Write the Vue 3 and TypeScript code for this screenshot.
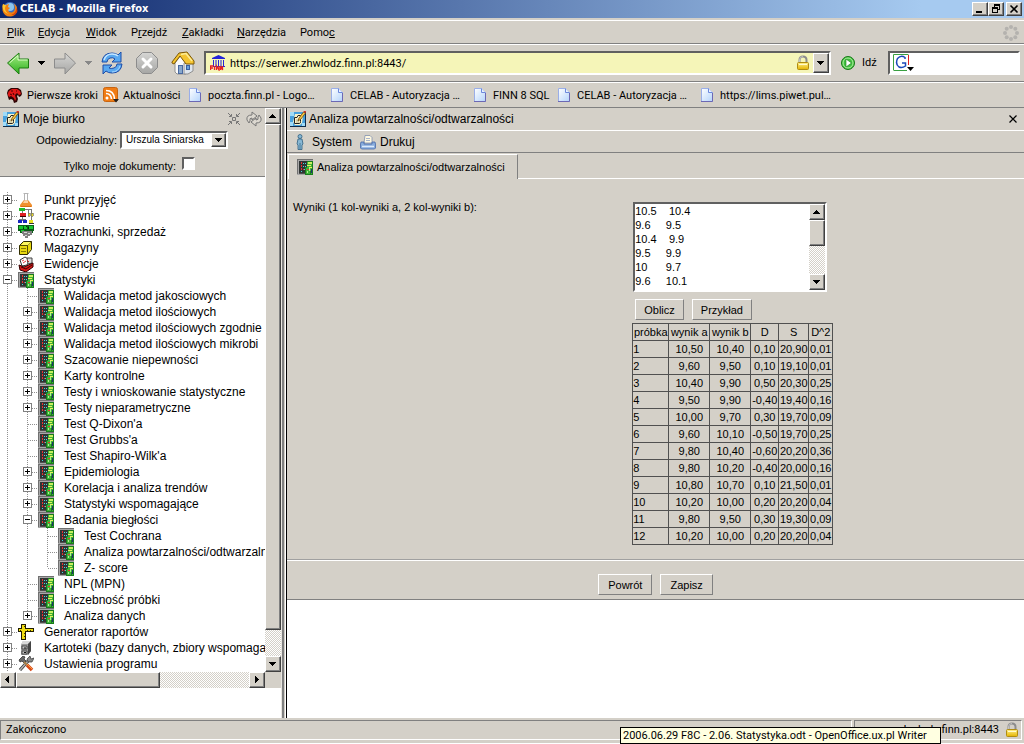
<script setup lang="ts">
import { ref } from 'vue'

interface MenuItem { pre: string; key: string; post: string }
interface TreeNode { label: string; icon: string; level: number; toggle: '' | '+' | '-'; last?: boolean }

const menu: MenuItem[] = [
  { pre: '', key: 'P', post: 'lik' },
  { pre: '', key: 'E', post: 'dycja' },
  { pre: '', key: 'W', post: 'idok' },
  { pre: 'P', key: 'r', post: 'zejdź' },
  { pre: '', key: 'Z', post: 'akładki' },
  { pre: '', key: 'N', post: 'arzędzia' },
  { pre: 'Pomo', key: 'c', post: '' },
]

const bookmarks = [
  { icon: 'dino', label: 'Pierwsze kroki' },
  { icon: 'rss', label: 'Aktualności' },
  { icon: 'page', label: 'poczta.finn.pl - Logo…' },
  { icon: 'page', label: 'CELAB - Autoryzacja …' },
  { icon: 'page', label: 'FINN 8 SQL' },
  { icon: 'page', label: 'CELAB - Autoryzacja …' },
  { icon: 'page', label: 'https://lims.piwet.pul…' },
]

const tree: TreeNode[] = [
  { label: 'Punkt przyjęć', icon: 'flask', level: 0, toggle: '+' },
  { label: 'Pracownie', icon: 'labs', level: 0, toggle: '+' },
  { label: 'Rozrachunki, sprzedaż', icon: 'money', level: 0, toggle: '+' },
  { label: 'Magazyny', icon: 'box', level: 0, toggle: '+' },
  { label: 'Ewidencje', icon: 'records', level: 0, toggle: '+' },
  { label: 'Statystyki', icon: 'calc', level: 0, toggle: '-' },
  { label: 'Walidacja metod jakosciowych', icon: 'calc', level: 1, toggle: '' },
  { label: 'Walidacja metod ilościowych', icon: 'calc', level: 1, toggle: '+' },
  { label: 'Walidacja metod ilościowych zgodnie', icon: 'calc', level: 1, toggle: '+' },
  { label: 'Walidacja metod ilościowych mikrobi', icon: 'calc', level: 1, toggle: '+' },
  { label: 'Szacowanie niepewności', icon: 'calc', level: 1, toggle: '+' },
  { label: 'Karty kontrolne', icon: 'calc', level: 1, toggle: '+' },
  { label: 'Testy i wnioskowanie statystyczne', icon: 'calc', level: 1, toggle: '+' },
  { label: 'Testy nieparametryczne', icon: 'calc', level: 1, toggle: '+' },
  { label: "Test Q-Dixon'a", icon: 'calc', level: 1, toggle: '' },
  { label: "Test Grubbs'a", icon: 'calc', level: 1, toggle: '' },
  { label: "Test Shapiro-Wilk'a", icon: 'calc', level: 1, toggle: '' },
  { label: 'Epidemiologia', icon: 'calc', level: 1, toggle: '+' },
  { label: 'Korelacja i analiza trendów', icon: 'calc', level: 1, toggle: '+' },
  { label: 'Statystyki wspomagające', icon: 'calc', level: 1, toggle: '+' },
  { label: 'Badania biegłości', icon: 'calc', level: 1, toggle: '-' },
  { label: 'Test Cochrana', icon: 'calc', level: 2, toggle: '' },
  { label: 'Analiza powtarzalności/odtwarzalności', icon: 'calc', level: 2, toggle: '' },
  { label: 'Z- score', icon: 'calc', level: 2, toggle: '', last: true },
  { label: 'NPL (MPN)', icon: 'calc', level: 1, toggle: '' },
  { label: 'Liczebność próbki', icon: 'calc', level: 1, toggle: '' },
  { label: 'Analiza danych', icon: 'calc', level: 1, toggle: '+', last: true },
  { label: 'Generator raportów', icon: 'ruler', level: 0, toggle: '+' },
  { label: 'Kartoteki (bazy danych, zbiory wspomaga', icon: 'cabinet', level: 0, toggle: '+' },
  { label: 'Ustawienia programu', icon: 'tools', level: 0, toggle: '+' },
]

const columns = ['próbka', 'wynik a', 'wynik b', 'D', 'S', 'D^2']
const rows: string[][] = [
  ['1', '10,50', '10,40', '0,10', '20,90', '0,01'],
  ['2', '9,60', '9,50', '0,10', '19,10', '0,01'],
  ['3', '10,40', '9,90', '0,50', '20,30', '0,25'],
  ['4', '9,50', '9,90', '-0,40', '19,40', '0,16'],
  ['5', '10,00', '9,70', '0,30', '19,70', '0,09'],
  ['6', '9,60', '10,10', '-0,50', '19,70', '0,25'],
  ['7', '9,80', '10,40', '-0,60', '20,20', '0,36'],
  ['8', '9,80', '10,20', '-0,40', '20,00', '0,16'],
  ['9', '10,80', '10,70', '0,10', '21,50', '0,01'],
  ['10', '10,20', '10,00', '0,20', '20,20', '0,04'],
  ['11', '9,80', '9,50', '0,30', '19,30', '0,09'],
  ['12', '10,20', '10,00', '0,20', '20,20', '0,04'],
]

const url = ref('https://serwer.zhwlodz.finn.pl:8443/')
const search = ref('')
const owner = ref('Urszula Siniarska')
const onlyMine = ref(false)
const samples = ref(
  ['10.5    10.4', '9.6     9.5', '10.4    9.9', '9.5     9.9', '10      9.7', '9.6     10.1'].join('\n'),
)
</script>

<template>
  <div class="window">
    <svg class="defs" aria-hidden="true">
      <defs>
        <linearGradient id="g-green" x1="0" y1="0" x2="0" y2="1"><stop offset="0" stop-color="#a8f088" /><stop offset="1" stop-color="#2cae1c" /></linearGradient>
        <linearGradient id="g-gray" x1="0" y1="0" x2="0" y2="1"><stop offset="0" stop-color="#d6d6d4" /><stop offset="1" stop-color="#a6a6a4" /></linearGradient>
        <linearGradient id="g-page" x1="0" y1="0" x2="1" y2="1"><stop offset="0" stop-color="#fff" /><stop offset="1" stop-color="#b4d4fc" /></linearGradient>
        <linearGradient id="g-lock" x1="0" y1="0" x2="0" y2="1"><stop offset="0" stop-color="#fff08c" /><stop offset="1" stop-color="#e4b400" /></linearGradient>
      </defs>
      <symbol id="i-firefox" viewBox="0 0 16 16">
        <circle cx="8" cy="8" r="7" fill="#3a6fc0" /><circle cx="8" cy="6" r="4" fill="#8cc4ec" />
        <path d="M1 3q1 1 3 1l3-1-1 3 2 1-2 2q1 3 4 2.500q3-1 3-5l-1-4q4 3 3 8-2 5-7 5-6 0-7.500-6Q0 6 1 3z" fill="#f08010" />
        <path d="M1 3q1 1 3 1L3 7q0 4 4 6-5-1-6-5Q0 5 1 3z" fill="#f8c830" /><path d="M14 6q1 6-5 8 5 1 6.500-4z" fill="#d84408" />
      </symbol>
      <symbol id="i-dino" viewBox="0 0 16 16">
        <path d="M0 6l1-3 3-2h7l3 2 1 4-1 2-2 1-1-2-1 1 1 3-1 3-3 1-1-3-2-1-2 1-1-3z" fill="#300404" />
        <path d="M1 6l1-2 3-2h5l3 2 1 3-2 1-2-2-2 2 1 4-1 2-1-3-3-2-2 1-1-2z" fill="#e01818" />
        <path d="M4 4h2M9 4h1M3 7l2 1M6 6l1 2" stroke="#400" />
      </symbol>
      <symbol id="i-rss" viewBox="0 0 16 16">
        <rect x="0.500" y="0.500" width="14" height="14" rx="2" fill="#f07c14" stroke="#c86410" /><circle cx="4" cy="11" r="1.500" fill="#fff" />
        <path d="M3 6.500q5 0 5.500 5.500M3 3.500q8 0 8.500 8.500" stroke="#fff" stroke-width="1.600" fill="none" /><path d="M10 12h6l-3 3.500z" fill="#222" />
      </symbol>
      <symbol id="i-page" viewBox="0 0 16 16">
        <path d="M1.500 1.500h7l4 4v9h-11z" fill="url(#g-page)" stroke="#9aaee8" /><path d="M8.500 1.500v4h4" fill="#e8f2ff" stroke="#6c88dc" /><path d="M1 14.500h11.500V6" fill="none" stroke="#6c68b4" />
      </symbol>
      <symbol id="i-bank" viewBox="0 0 16 16">
        <path d="M2 3L8.500 0 15 3v1H2zM3 5h1v6H3zm2.500 0h1v6h-1zM8 5h1v6H8zm2.500 0h1v6h-1zM13 5h1v6h-1zM3 11h12v1H3z" fill="#2424d8" />
        <path d="M.5 15v-4h3m-3 2h2.500M4.500 11v4M6.500 15v-4l2.500 4v-4M10.500 15v-4l2 4v-4" stroke="#e82020" stroke-width="1.300" fill="none" />
      </symbol>
      <symbol id="i-lock" viewBox="0 0 16 16">
        <path d="M4.500 8V5q0-3.500 3.500-3.500T11.500 5v3" fill="none" stroke="#8c8c8c" stroke-width="2" /><path d="M4.500 7V5q0-3.500 3.500-3.500" fill="none" stroke="#c4c4c4" />
        <rect x="2.500" y="7.500" width="11" height="7" rx="1" fill="url(#g-lock)" stroke="#b08c10" /><path d="M4 9.500h8" stroke="#fffbd0" />
      </symbol>
      <symbol id="i-note" viewBox="0 0 16 16">
        <rect x="0" y="1" width="16" height="15" fill="#102c48" /><rect x="0" y="1" width="15" height="14" fill="#48a0dc" /><path d="M0 1h4v4H0zm0 10h3v4H0zm12 1h3v3h-3z" fill="#a0dcf8" />
        <path d="M5 3h6l2 2-1 7-2 2H5l-2-3z" fill="#fcf4c8" /><path d="M10.500 4.500H8l-1 2H4.500v6h5q1 0 1-2z" fill="#fcf4c8" stroke="#222" /><path d="M6 9h3M6 11h3" stroke="#b8b08c" />
        <path d="M8 10l1-3 4.500-6 2 1L11 8z" fill="#f8c840" stroke="#704810" stroke-width=".8" /><path d="M13.500 1l2 1 .5-2h-2z" fill="#d03020" />
      </symbol>
      <symbol id="i-flask" viewBox="0 0 16 16">
        <path d="M5.500 1.500h5M6.500 2v6l-4 6M9.500 2v6l4 6" stroke="#b4b4b4" fill="none" /><path d="M5.500 8.500h5L14 13v2H2v-2z" fill="#f09030" /><path d="M6 9h4v2H5z" fill="#fcd0a0" /><path d="M3 14.500h10" stroke="#d86c10" />
      </symbol>
      <symbol id="i-labs" viewBox="0 0 16 16" shape-rendering="crispEdges">
        <path d="M4.500 3v10M7 1.500h6.500V6M10.500 5V2M1.500 13v-2h6v2M13.500 8v4" stroke="#777" fill="none" /><rect x="1" y="0" width="6" height="3" fill="#20b828" /><rect x="2" y="5" width="6" height="3" fill="#e02020" />
        <path d="M2 8h6v1H2z" fill="#400" /><path d="M10 5h2v3h-2zM13 5h2v3h-2z" fill="#e8d820" stroke="#776" stroke-width=".7" /><path d="M0 12h4v3H0zM5 12h4v3H5z" fill="#1828c0" /><path d="M11 12h4v3h-4z" fill="#e8e020" /><path d="M11 15h5v1h-5z" fill="#333" />
      </symbol>
      <symbol id="i-money" viewBox="0 0 16 16" shape-rendering="crispEdges">
        <path d="M0 1h16v6h-1v2H2V7H0z" fill="#0c5c18" /><path d="M1 2h4v3H1zm5 0h3v3H6zm5 0h4v3h-4zM3 6h3v2H3z" fill="#18c830" /><path d="M8 2h1v1H8zM5 4h1v1H5zM10 3h1v2h-1z" fill="#042c08" />
        <path d="M4 7h10v4h-2v1h-2v2H7v-2H5v-2H4z" fill="#808080" /><path d="M6 8h3v1H6zm4 1h2v1h-2zM7 11h2v1H7z" fill="#d8d8d8" />
      </symbol>
      <symbol id="i-box" viewBox="0 0 16 16">
        <path d="M1.500 5.500l4-4h8v8l-4 5h-8z" fill="#e8d810" stroke="#302c00" /><path d="M1.500 5.500h8l4-4M9.500 5.500v9" fill="none" stroke="#554c00" /><path d="M3 8.500h5M3 11.500h5" stroke="#887c00" /><path d="M3 5l3-3h7l-3 3z" fill="#fcf860" />
      </symbol>
      <symbol id="i-records" viewBox="0 0 16 16">
        <path d="M2 4l5-3 5 3-3 5-5 1z" fill="#fff" stroke="#333" /><path d="M9 2h5v5l-4 1z" fill="#ddd" stroke="#444" /><path d="M4 5l2-1M5 7l3-2" stroke="#e04040" />
        <path d="M1 9l5 2 9-4v4l-7 5-6-2z" fill="#d81818" stroke="#300" /><path d="M3 11l5 2 6-4" fill="none" stroke="#400" /><path d="M9 4l2 2" stroke="#d02020" />
      </symbol>
      <symbol id="i-calc" viewBox="0 0 16 16" shape-rendering="crispEdges">
        <rect width="16" height="16" fill="#a8a8a8" /><path d="M0 0h16v1H1v14H0z" fill="#707070" /><path d="M2 2h13v12H2z" fill="#303434" /><path d="M2 14h7v1H2z" fill="#505050" />
        <path d="M4 3h1v2H4zM4 6h1v2H4zM4 9h1v2H4zM6 10h1v1H6z" fill="#e83030" /><path d="M6 4h1v1H6zM8 4h1v1H8zM6 7h1v1H6zM8 7h1v1H8zM7 10h1v1H7zM4 12h1v1H4z" fill="#48d8e0" />
        <path d="M10 2h6v14H8V8h2z" fill="#187c1c" /><path d="M10 3h5v12h-1v-3h-1v3H9V9h1z" fill="#40b438" /><path d="M11 3h4v2h-4z" fill="#c8f060" /><path d="M10 6h4v1h-4zM12 8h3v1h-3z" fill="#e8f060" /><path d="M10 10h2v1h-2z" fill="#e04030" /><path d="M10 12h1v2h-1zM12 9h1v3h-1z" fill="#b0f090" /><path d="M14 10h1v4h-1z" fill="#203070" />
      </symbol>
      <symbol id="i-ruler" viewBox="0 0 16 16" shape-rendering="crispEdges">
        <path d="M3 0h5v4h8v4H8v8H3V8H0V4h3z" fill="#201c00" /><path d="M4 1h3v14H4zM1 5h14v2H1z" fill="#f0dc10" /><path d="M6 2h1v1H6zM6 9h1v1H6zM6 12h1v1H6zM2 6h1v1H2zM9 6h1v1H9zM12 6h1v1h-1z" fill="#403800" />
      </symbol>
      <symbol id="i-cabinet" viewBox="0 0 16 16">
        <path d="M5 1h8v10l-3 4H3V5z" fill="#989898" /><path d="M5 1h8l-3 3H3z" fill="#d8d8d8" /><path d="M10 4l3-3v10l-3 4z" fill="#444" /><path d="M4 6h5v3H4zM4 11h5v3H4z" fill="#c4c4c4" stroke="#333" stroke-width=".8" /><path d="M6 8h2M6 12.500h2" stroke="#111" />
      </symbol>
      <symbol id="i-tools" viewBox="0 0 16 16">
        <path d="M2 14l8-9" stroke="#333" stroke-width="3" /><path d="M2 14l8-9" stroke="#b0b0b0" stroke-width="1.600" /><path d="M9 3l3-3 1 3 3-1-2 4h-4z" fill="#888" stroke="#333" stroke-width=".7" />
        <path d="M1 4l4-4 2 1-1 2 2 2-2 2-2-2-2 1z" fill="#666" stroke="#222" stroke-width=".7" /><path d="M6 6l3 3" stroke="#a88048" stroke-width="2" /><path d="M9 9l5 5" stroke="#d84818" stroke-width="3.500" /><path d="M9 8l5 5" stroke="#f8a040" />
      </symbol>
      <symbol id="i-person" viewBox="0 0 16 16">
        <circle cx="8" cy="2.500" r="2" fill="#88b8d4" stroke="#306080" stroke-width=".8" /><path d="M6 5h4l1 5-1 1v4.500H6V11l-1-1z" fill="#88b8d4" stroke="#306080" stroke-width=".8" /><path d="M8 9v6" stroke="#306080" stroke-width=".7" />
      </symbol>
      <symbol id="i-printer" viewBox="0 0 16 16">
        <path d="M4 9l1-7.500h5l2 2L12 9z" fill="#fff8e0" stroke="#8090b0" stroke-width=".8" /><path d="M6 4.500h4M6 6.500h4" stroke="#a8b4cc" /><path d="M1 8h3v2h8V8h3l.5 2v4l-1 1h-13l-1-1v-4z" fill="#88acdc" stroke="#4868a8" stroke-width=".8" /><path d="M2 12.500h12" stroke="#dceafc" stroke-width="1.500" />
      </symbol>
      <symbol id="i-collapse" viewBox="0 0 16 16">
        <path d="M2 2l3 3M14 2l-3 3M2 14l3-3M14 14l-3-3" stroke="#777" /><path d="M5.500 3v2.500H3M10.500 3v2.500H13M5.500 13v-2.500H3M10.500 13v-2.500H13M6.500 6.500h3v3h-3z" fill="none" stroke="#777" />
      </symbol>
      <symbol id="i-refresh" viewBox="0 0 16 16">
        <path d="M1 9Q0 4 6 4V1l5 4-5 4V7Q3 7 4 10l-1 2z" fill="#dcd8d0" stroke="#777" /><path d="M15 7q1 5-5 5v3l-5-4 5-4v2q3 0 2-3l1-2z" fill="#dcd8d0" stroke="#777" />
      </symbol>
      <symbol id="i-up" viewBox="0 0 8 8" shape-rendering="crispEdges"><path d="M3 2h1v1h1v1h1v1h1v1H0V5h1V4h1V3h1z" /></symbol>
      <symbol id="i-down" viewBox="0 0 8 8" shape-rendering="crispEdges"><path d="M0 2h7v1H6v1H5v1H4v1H3V5H2V4H1V3H0z" /></symbol>
      <symbol id="i-left" viewBox="0 0 8 8" shape-rendering="crispEdges"><path d="M5 0v7H4V6H3V5H2V4H1V3h1V2h1V1h1V0z" /></symbol>
      <symbol id="i-right" viewBox="0 0 8 8" shape-rendering="crispEdges"><path d="M2 0v7h1V6h1V5h1V4h1V3H5V2H4V1H3V0z" /></symbol>
    </svg>

    <header class="title-bar">
      <svg class="ic"><use href="#i-firefox" /></svg>
      <h1>CELAB - Mozilla Firefox</h1>
      <div class="window-buttons">
        <button class="raised" aria-label="Minimalizuj"><svg viewBox="0 0 12 10"><path d="M2 8h6" stroke="#000" stroke-width="2" /></svg></button>
        <button class="raised" aria-label="Przywróć"><svg viewBox="0 0 12 10" shape-rendering="crispEdges"><path d="M4 0h6v2H4zM4 2h1v2H4zM9 2h1v4H9zM8 5h1v1H8zM2 3h6v2H2zM2 5h1v4H2zM7 5h1v4H7zM2 8h6v1H2z" /></svg></button>
        <button class="raised close" aria-label="Zamknij"><svg viewBox="0 0 12 10"><path d="M2.500 1.500l7 7M9.500 1.500l-7 7" stroke="#000" stroke-width="1.600" /></svg></button>
      </div>
    </header>

    <nav class="menu-bar" aria-label="Menu">
      <button v-for="item in menu" :key="item.key + item.post">{{ item.pre }}<u>{{ item.key }}</u>{{ item.post }}</button>
      <svg class="throbber" viewBox="0 0 16 16"><g fill="#b4b2ae"><circle cx="8" cy="2" r="2" /><circle cx="12.300" cy="3.700" r="2" /><circle cx="14" cy="8" r="2" /><circle cx="12.300" cy="12.300" r="2" /><circle cx="8" cy="14" r="2" /><circle cx="3.700" cy="12.300" r="2" /><circle cx="2" cy="8" r="2" /><circle cx="3.700" cy="3.700" r="2" /></g></svg>
    </nav>

    <div class="toolbar">
      <button class="tool back" aria-label="Wstecz"><svg class="big" viewBox="0 0 24 24"><path d="M1.500 12L13 2v6h9.500v9H13v6z" fill="url(#g-green)" stroke="#1c7c10" /><path d="M3.500 12L12 4.500V9h9.500" fill="none" stroke="#dcfcc8" /></svg></button>
      <button class="drop" aria-label="Historia wstecz"><svg viewBox="0 0 8 8"><use href="#i-down" /></svg></button>
      <button class="tool" aria-label="Dalej"><svg class="big" viewBox="0 0 24 24"><path d="M22.500 12L12 2v6H1.500v9H12v6z" fill="url(#g-gray)" stroke="#8c8c8c" /></svg></button>
      <button class="drop pale" aria-label="Historia dalej"><svg viewBox="0 0 8 8"><use href="#i-down" /></svg></button>
      <button class="tool" aria-label="Odśwież"><svg class="big" viewBox="0 0 24 24"><path d="M2 11Q3 2 12 2q4 0 6 2l3-3v10H12l3-3q-2-2-5-1-3 1-3 4z" fill="#58a8f0" stroke="#1c4ca8" /><path d="M22 13q-1 9-10 9-4 0-6-2l-3 3V14h9l-3 3q2 1 5 0 3-1 3-4z" fill="#58a8f0" stroke="#1c4ca8" /><path d="M4 9q2-6 8-6 4 0 6 2" fill="none" stroke="#c8e8ff" stroke-width="1.500" /><path d="M20 15q-2 6-8 6" fill="none" stroke="#a8d8ff" /></svg></button>
      <button class="tool stop" aria-label="Zatrzymaj"><svg class="big" viewBox="0 0 24 24"><path d="M7.500 1.500h9l6 6v9l-6 6h-9l-6-6v-9z" fill="url(#g-gray)" stroke="#8c8c8c" /><path d="M8 8l8 8M16 8l-8 8" stroke="#fff" stroke-width="3" stroke-linecap="round" /></svg></button>
      <button class="tool home" aria-label="Strona startowa"><svg class="big" viewBox="0 0 24 24"><path d="M4 12l6-8 5 8v11H6l-2-2z" fill="#fafafa" stroke="#909090" /><path d="M13 12h9v8l-5 3h-4z" fill="#dfe6ee" stroke="#909090" /><rect x="7.500" y="14.500" width="4" height="8" fill="#88a8cc" stroke="#4868a0" /><rect x="15.500" y="14.500" width="3" height="4" fill="#68a0dc" stroke="#3860a0" /><path d="M1 11L8 2l8-1 7 9v3h-8L9 5l-6 8-2-1z" fill="#f4c430" stroke="#7c5808" /><path d="M10 3.500l5-1 6 7.500" fill="none" stroke="#fcec98" stroke-width="1.500" /></svg></button>
      <div class="field address">
        <svg class="ic"><use href="#i-bank" /></svg>
        <input v-model="url" type="text" aria-label="Adres" />
        <svg class="ic"><use href="#i-lock" /></svg>
        <button class="raised arrow" aria-label="Pokaż historię adresów"><svg viewBox="0 0 8 8"><use href="#i-down" /></svg></button>
      </div>
      <button class="go"><svg class="ic" viewBox="0 0 16 16"><circle cx="8" cy="8" r="6.500" fill="#40c040" stroke="#187818" /><circle cx="8" cy="8" r="5" fill="none" stroke="#b0f0a0" /><path d="M6 4l5.500 4L6 12z" fill="#fff" stroke="#187818" stroke-width=".6" /></svg>Idź</button>
      <div class="field search">
        <svg class="engine" viewBox="0 0 22 18"><path d="M.5 16.500V.5h15" fill="none" stroke="#3aa040" /><path d="M15.500 1v10" stroke="#e02020" /><path d="M1 16.500h13" stroke="#3aa040" /><path d="M12 5V3.500Q8 .5 4.500 4.500 2 10 6 13q3 1.500 6.500-1V9H9" fill="none" stroke="#1c48b8" stroke-width="1.500" /><path d="M14 13h7l-3.500 4z" /></svg>
        <input v-model="search" type="text" aria-label="Szukaj" />
      </div>
    </div>

    <nav class="bookmarks" aria-label="Zakładki">
      <a v-for="(b, i) in bookmarks" :key="i" href="#"><svg class="ic"><use :href="'#i-' + b.icon" /></svg><span>{{ b.label }}</span></a>
    </nav>

    <div class="content">
      <aside class="sidebar">
        <div class="side-frame">
          <div class="side-body">
            <div class="side-head">
              <div class="side-title">
                <svg class="ic"><use href="#i-note" /></svg>
                <h2>Moje biurko</h2>
                <button aria-label="Zwiń"><svg class="ic"><use href="#i-collapse" /></svg></button>
                <button aria-label="Odśwież drzewo"><svg class="ic"><use href="#i-refresh" /></svg></button>
              </div>
              <div class="filter">
                <label for="owner">Odpowiedzialny:</label>
                <div class="select">
                  <select id="owner" v-model="owner"><option>Urszula Siniarska</option></select>
                  <span class="raised arrow"><svg viewBox="0 0 8 8"><use href="#i-down" /></svg></span>
                </div>
              </div>
              <div class="filter mine">
                <label for="mine">Tylko moje dokumenty:</label>
                <input id="mine" v-model="onlyMine" type="checkbox" />
              </div>
            </div>
            <ul class="tree">
              <li v-for="(n, i) in tree" :key="i">
                <svg v-for="g in n.level" :key="g" class="guide" viewBox="0 0 20 16"><path d="M7.500 0v16" class="dots" /></svg>
                <svg class="node" viewBox="0 0 18 16" shape-rendering="crispEdges">
                  <path :d="n.last ? 'M7.500 0v8' : 'M7.500 0v16'" class="dots" /><path d="M8 8.500h10" class="dots" />
                  <g v-if="n.toggle"><rect x="3.500" y="3.500" width="8" height="8" fill="#fff" stroke="#808080" /><path d="M5 7.500h5" stroke="#000" /><path v-if="n.toggle === '+'" d="M7.500 5v5" stroke="#000" /></g>
                </svg>
                <svg class="ic"><use :href="'#i-' + n.icon" /></svg>
                <a href="#">{{ n.label }}</a>
              </li>
            </ul>
          </div>
          <div class="scroll vertical">
            <button class="raised" aria-label="W górę"><svg viewBox="0 0 8 8"><use href="#i-up" /></svg></button>
            <div class="raised thumb"></div>
            <div class="gap"></div>
            <button class="raised" aria-label="W dół"><svg viewBox="0 0 8 8"><use href="#i-down" /></svg></button>
          </div>
        </div>
        <div class="scroll horizontal">
          <button class="raised" aria-label="W lewo"><svg viewBox="0 0 8 8"><use href="#i-left" /></svg></button>
          <div class="raised thumb"></div>
          <div class="gap"></div>
          <button class="raised" aria-label="W prawo"><svg viewBox="0 0 8 8"><use href="#i-right" /></svg></button>
          <div class="corner"></div>
        </div>
      </aside>
      <div class="splitter"></div>

      <main class="main">
        <div class="main-title">
          <svg class="ic"><use href="#i-note" /></svg>
          <h2>Analiza powtarzalności/odtwarzalności</h2>
          <button aria-label="Zamknij panel"><svg viewBox="0 0 8 8"><path d="M.5.5l7 7M7.500.5l-7 7" stroke="#000" stroke-width="1.200" /></svg></button>
        </div>
        <div class="main-menu">
          <button><svg class="ic"><use href="#i-person" /></svg>System</button>
          <button><svg class="ic"><use href="#i-printer" /></svg>Drukuj</button>
        </div>
        <div class="tabs">
          <button class="tab"><svg class="ic"><use href="#i-calc" /></svg>Analiza powtarzalności/odtwarzalności</button>
          <div class="tab-rest"></div>
        </div>
        <form class="form" @submit.prevent>
          <label for="samples">Wyniki (1 kol-wyniki a, 2 kol-wyniki b):</label>
          <div class="values">
            <div class="field samples">
              <textarea id="samples" v-model="samples"></textarea>
              <div class="scroll vertical">
                <button class="raised" type="button" aria-label="Przewiń w górę"><svg viewBox="0 0 8 8"><use href="#i-up" /></svg></button>
                <div class="raised thumb"></div>
                <div class="gap"></div>
                <button class="raised" type="button" aria-label="Przewiń w dół"><svg viewBox="0 0 8 8"><use href="#i-down" /></svg></button>
              </div>
            </div>
            <div class="actions">
              <button class="push" type="button">Oblicz</button>
              <button class="push" type="button">Przykład</button>
            </div>
            <table>
              <colgroup><col class="c-no" /><col class="c-res" /><col class="c-res" /><col class="c-d" /><col class="c-s" /><col class="c-sq" /></colgroup>
              <thead><tr><th v-for="c in columns" :key="c" scope="col">{{ c }}</th></tr></thead>
              <tbody><tr v-for="r in rows" :key="r[0]"><td v-for="(v, j) in r" :key="j">{{ v }}</td></tr></tbody>
            </table>
          </div>
        </form>
        <div class="footer">
          <button class="push">Powrót</button>
          <button class="push">Zapisz</button>
        </div>
      </main>
    </div>

    <footer class="status">
      <div class="pane message">Zakończono</div>
      <div class="pane host"><span>serwer.zhwlodz.finn.pl:8443</span><svg class="ic"><use href="#i-lock" /></svg></div>
      <div class="tooltip" role="tooltip">2006.06.29 F8C - 2.06. Statystyka.odt - OpenOffice.ux.pl Writer</div>
    </footer>
  </div>
</template>

<style>
body { margin: 0; background: #fff; }
</style>

<style scoped>
* { box-sizing: border-box; }
.window { display: flex; flex-direction: column; min-height: 100vh; background: #d4d0c8; color: #000; font: 11px/14px Roboto, "Noto Sans", sans-serif; overflow: hidden; }
.defs { position: absolute; width: 0; height: 0; }
.ic { display: block; flex: none; width: 16px; height: 16px; }
button { font: inherit; color: inherit; background: none; border: 0; padding: 0; margin: 0; display: flex; align-items: center; }
button svg, .arrow svg { display: block; flex: none; }
a { color: inherit; text-decoration: none; }
h1, h2 { margin: 0; font-size: 12px; font-weight: 400; }
input { font: inherit; border: 0; outline: 0; padding: 0; background: transparent; }
.raised { display: flex; align-items: center; justify-content: center; background: #d4d0c8; border: 1px solid; border-color: #fff #404040 #404040 #fff; box-shadow: inset -1px -1px #808080; }
.raised svg { width: 8px; height: 8px; }
.field { display: flex; align-items: center; background: #fff; border: 2px solid; border-color: #606060 #fff #fff #606060; }

.title-bar { display: flex; align-items: center; height: 18px; padding: 0 2px; gap: 2px; background: linear-gradient(90deg, #0a246a, #a6caf0 90%); color: #fff; }
.title-bar h1 { flex: 1; font: bold 11px/16px "DejaVu Sans Condensed", "Open Sans", sans-serif; }
.window-buttons { display: flex; }
.window-buttons button { width: 16px; height: 14px; }
.window-buttons svg { width: 12px; height: 10px; }
.window-buttons .close { margin-left: 2px; }

.menu-bar { display: grid; grid-template-columns: 31px 48px 45px 51px 55px 63px 1fr 16px; align-items: center; margin-top: 2px; height: 24px; padding: 1px 5px 0 7px; border-top: 1px solid #fff; border-bottom: 1px solid #808080; }
.throbber { width: 16px; height: 16px; }

.toolbar { display: flex; align-items: center; height: 38px; padding: 0 4px 0 6px; border-top: 1px solid #fff; border-bottom: 1px solid #808080; }
.big { width: 24px; height: 24px; }
.drop { width: 23px; justify-content: center; }
.drop svg { width: 8px; height: 8px; }
.drop.pale { fill: #888; }
.stop { margin-left: 11px; }
.home { margin-left: 12px; }
.address { flex: 1; height: 24px; margin: 0 9px; padding-left: 4px; background: #f5f5b8; }
.address input { flex: 1; min-width: 0; margin: 0 4px; padding-top: 2px; }
.arrow { width: 16px; height: 20px; flex: none; }
.address .arrow { margin-left: 2px; }
.go { gap: 6px; width: 48px; }
.search { width: 132px; height: 24px; padding-left: 3px; }
.engine { width: 22px; height: 18px; flex: none; }
.search input { flex: 1; min-width: 0; }

.bookmarks { display: grid; grid-template-columns: 96px 85px 142px 143px 84px 143px 1fr; align-items: center; height: 26px; padding: 0 7px; border-top: 1px solid #fff; border-bottom: 1px solid #808080; }
.bookmarks a { display: flex; align-items: center; gap: 4px; white-space: nowrap; }
.bookmarks span { padding-top: 2px; }

.content { flex: 1; display: flex; background: #fff; font-family: "Liberation Sans", Arial, sans-serif; }
.sidebar { width: 281px; flex: none; }
.side-frame { display: flex; }
.side-body { flex: 1; min-width: 0; overflow: hidden; }
.side-head { height: 69px; background: #d4d0c8; border-bottom: 1px solid #808080; }
.side-title { display: flex; align-items: center; height: 22px; padding: 0 3px; gap: 4px; }
.side-title h2 { flex: 1; }
.filter { display: flex; align-items: center; justify-content: flex-end; height: 20px; padding-right: 37px; gap: 3px; }
.select { display: flex; width: 108px; height: 18px; background: #fff; border: 2px solid; border-color: #606060 #fff #fff #606060; }
.select select { flex: 1; min-width: 0; appearance: none; border: 0; padding: 0 4px; background: transparent; font: 10px/14px "Liberation Sans", Arial, sans-serif; outline: 0; }
.select .arrow { width: 15px; height: 14px; }
.filter.mine { height: 26px; padding: 6px 70px 0 0; gap: 6px; }
.filter input { appearance: none; width: 13px; height: 13px; margin: 0 0 6px; background: #fff; border: 2px solid; border-color: #606060 #fff #fff #606060; }
.tree { list-style: none; margin: 0; padding: 15px 0 0; font-size: 12px; }
.tree li { display: flex; height: 16px; white-space: nowrap; line-height: 16px; }
.tree a { margin-left: 10px; }
.guide { width: 20px; height: 16px; flex: none; }
.node { width: 18px; height: 16px; flex: none; }
.dots { fill: none; stroke: #909090; stroke-dasharray: 1 1; }
.scroll { display: flex; flex: none; }
.scroll button { width: 16px; height: 16px; flex: none; }
.scroll .gap { flex: 1; background: repeating-conic-gradient(#fff 0 25%, #d4d0c8 0 50%) 0 0 / 2px 2px; }
.vertical { flex-direction: column; width: 16px; }
.vertical .thumb { flex: 19; }
.sidebar .horizontal .thumb { width: 144px; }
.corner { width: 16px; background: #d4d0c8; }
.splitter { width: 6px; flex: none; background: #d4d0c8; border-left: 1px solid #e8e6e0; border-right: 1px solid #000; box-shadow: inset -1px 0 #fff, inset 2px 0 #808080; }

.main { flex: 1; min-width: 0; }
.main-title { display: flex; align-items: center; height: 22px; padding: 0 7px 0 3px; gap: 3px; background: #d4d0c8; }
.main-title h2 { flex: 1; }
.main-title svg:not(.ic) { width: 8px; height: 8px; }
.main-menu { display: flex; height: 23px; padding: 0 5px; gap: 8px; background: #d4d0c8; border-top: 1px solid #fff; border-bottom: 1px solid #808080; font-size: 12px; }
.main-menu button { gap: 4px; }
.tabs { display: flex; background: #d4d0c8; padding: 1px 0 0 1px; height: 26px; }
.tab { padding: 0 12px 0 8px; gap: 4px; border: solid; border-width: 1px 1px 0 1px; border-color: #fff #808080 #fff #fff; }
.tab-rest { flex: 1; border-bottom: 1px solid #fff; }
.form { display: grid; grid-template-columns: 46% 1fr; padding: 21px 0 15px 6px; background: #d4d0c8; }
.values { padding: 2px 0 0 3px; }
.samples { width: 194px; height: 90px; margin-left: 1px; align-items: stretch; }
.samples textarea { flex: 1; min-width: 0; border: 0; outline: 0; resize: none; overflow: hidden; padding: 0; font: 11px/14px "Liberation Sans", Arial, sans-serif; white-space: pre; }
.samples .thumb { flex: none; height: 26px; }
.actions { display: flex; gap: 8px; padding: 7px 0 3px 3px; }
.actions .push { padding: 1px 8px 0; }
.push { justify-content: center; height: 21px; padding: 1px 9px 0; border: 1px solid; border-color: #fff #808080 #808080 #fff; }
table { border-collapse: collapse; table-layout: fixed; width: 201px; }
th, td { height: 17px; padding: 0; border: 1px solid #505050; font-weight: 400; line-height: 14px; text-align: center; white-space: nowrap; }
td:first-child { text-align: left; }
.c-no { width: 36px; }
.c-res { width: 41px; }
.c-d { width: 28px; }
.c-s { width: 30px; }
.c-sq { width: 24px; }
.footer { display: flex; justify-content: center; gap: 8px; padding: 13px 0 4px; background: #d4d0c8; border-top: 1px solid #fff; border-bottom: 1px solid #808080; box-shadow: 0 -1px #a0a0a0; }

.status { position: relative; display: flex; gap: 2px; height: 26px; padding: 2px 2px 3px 0; border-bottom: 1px solid #fff; }
.pane { display: flex; align-items: center; border: 1px solid; border-color: #808080 #fff #fff #808080; }
.message { flex: 1; padding-left: 5px; }
.host { justify-content: flex-end; width: 168px; padding-right: 1px; gap: 5px; }
.tooltip { position: absolute; right: 83px; bottom: -1px; width: 321px; height: 17px; padding: 0 2px; border: 1px solid #000; background: #ffffe1; line-height: 15px; white-space: nowrap; }
</style>
